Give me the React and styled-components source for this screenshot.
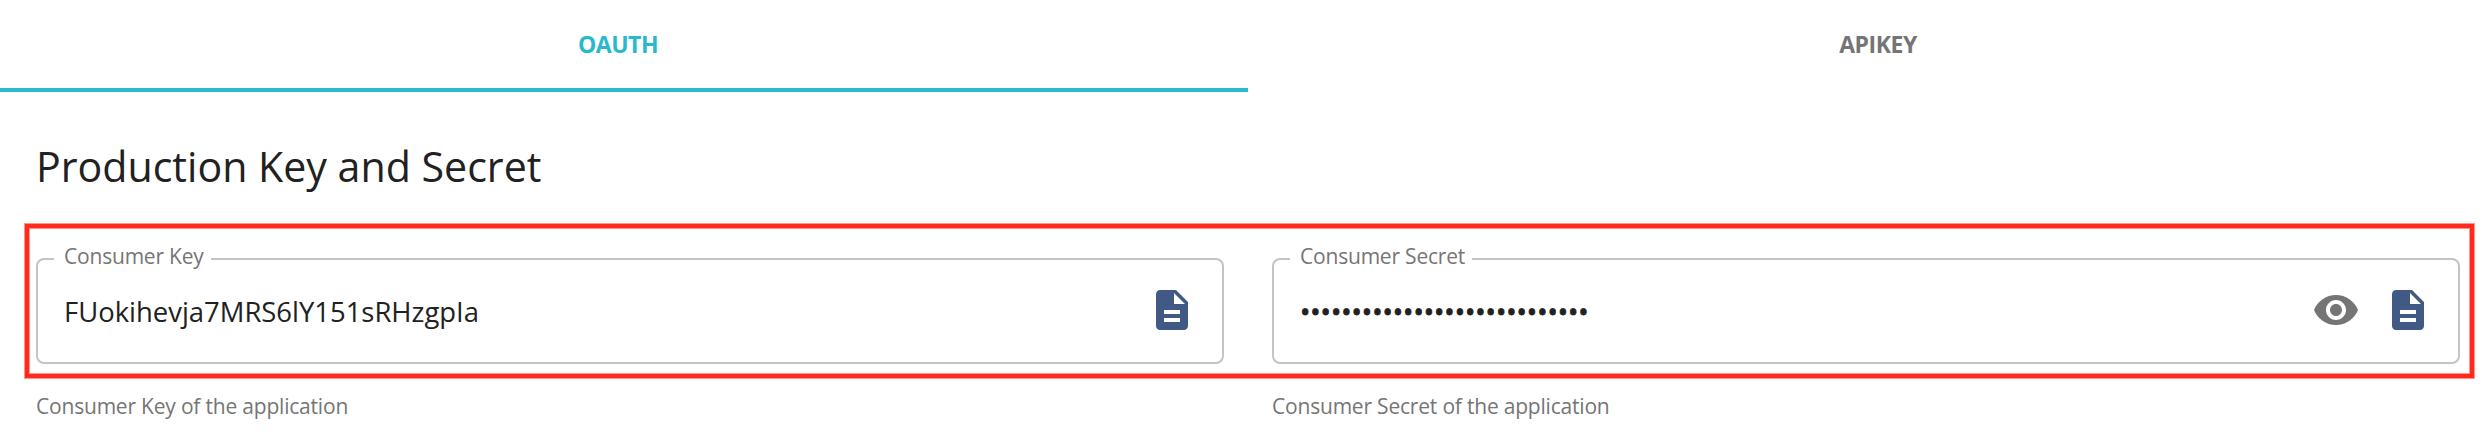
import React from 'react';
import styled, { createGlobalStyle } from 'styled-components';

const GlobalStyle = createGlobalStyle`
  * { box-sizing: border-box; }
  body {
    margin: 0;
    background: #fff;
    color: #212121;
    font-family: "Open Sans", sans-serif;
    overflow: hidden;
  }
`;

const Page = styled.main`
  height: 443px;
  overflow: hidden;
`;

const Tabs = styled.nav`
  display: flex;
  width: 2520px;
  margin-left: -12px;
`;

const Tab = styled.button`
  flex: 1;
  height: 92px;
  padding: 0 0 1px;
  border: 0;
  border-bottom: 4px solid ${(p) => (p.$active ? '#29b8ce' : 'transparent')};
  background: none;
  color: ${(p) => (p.$active ? '#29b8ce' : '#757575')};
  font: 700 23px/86px "Open Sans", sans-serif;
  letter-spacing: -0.45px;
  text-transform: uppercase;
`;

const Title = styled.h2`
  margin: 46px 0 30px 36px;
  font-size: 41.14px;
  font-weight: 400;
  line-height: 56px;
`;

const Highlight = styled.section`
  display: flex;
  gap: 48px;
  width: 2449px;
  height: 154px;
  margin-left: 25px;
  padding: 19px 10px 0 7px;
  border: 4px solid #ff2a1c;
  box-shadow: 0 0 0 1px rgba(255, 42, 28, 0.5), inset 0 0 0 1px rgba(255, 42, 28, 0.5);
`;

const Field = styled.fieldset`
  flex: 1;
  min-width: 0;
  height: 117px;
  margin: 0;
  padding: 0 26px;
  border: 2px solid #c4c4c4;
  border-radius: 8px;
`;

const Legend = styled.legend`
  height: 24px;
  margin-left: -10px;
  padding: 0 7px 0 10px;
  color: #757575;
  font-size: 21px;
  letter-spacing: -0.2px;
  line-height: 18px;
`;

const Row = styled.div`
  display: flex;
  align-items: center;
  gap: 24px;
  padding-top: 15px;
`;

const Value = styled.span`
  flex: 1;
  padding-top: 3px;
  font-size: 27.43px;
  line-height: 38px;
  -webkit-text-stroke: ${(p) => (p.$masked ? '0.8px #212121' : '0')};
`;

const Icon = styled.svg`
  width: 48px;
  height: 48px;
  fill: ${(p) => p.$color};
`;

const Helpers = styled.div`
  display: flex;
  gap: 48px;
  padding: 13px 28px 0 36px;
`;

const Helper = styled.p`
  flex: 1;
  margin: 0;
  color: #757575;
  font-size: 21px;
  letter-spacing: -0.2px;
  line-height: 30px;
`;

const CopyIcon = () => (
  <Icon viewBox="0 0 24 24" $color="#415a85">
    <path d="M14 2H6c-1.1 0-1.99.9-1.99 2L4 20c0 1.1.89 2 1.99 2H18c1.1 0 2-.9 2-2V8l-6-6zm2 16H8v-2h8v2zm0-4H8v-2h8v2zm-3-5V3.5L18.5 9H13z" />
  </Icon>
);

const EyeIcon = () => (
  <Icon viewBox="0 0 24 24" $color="#757575">
    <path d="M12 4.5C7 4.5 2.73 7.61 1 12c1.73 4.39 6 7.5 11 7.5s9.27-3.11 11-7.5c-1.73-4.39-6-7.5-11-7.5zM12 17c-2.76 0-5-2.24-5-5s2.24-5 5-5 5 2.24 5 5-2.24 5-5 5zm0-8c-1.66 0-3 1.34-3 3s1.34 3 3 3 3-1.34 3-3-1.34-3-3-3z" />
  </Icon>
);

export default function App() {
  return (
    <Page>
      <GlobalStyle />
      <Tabs>
        <Tab $active>OAuth</Tab>
        <Tab>ApiKey</Tab>
      </Tabs>
      <Title>Production Key and Secret</Title>
      <Highlight>
        <Field>
          <Legend>Consumer Key</Legend>
          <Row>
            <Value>FUokihevja7MRS6lY151sRHzgpIa</Value>
            <CopyIcon />
          </Row>
        </Field>
        <Field>
          <Legend>Consumer Secret</Legend>
          <Row>
            <Value $masked>{'•'.repeat(28)}</Value>
            <EyeIcon />
            <CopyIcon />
          </Row>
        </Field>
      </Highlight>
      <Helpers>
        <Helper>Consumer Key of the application</Helper>
        <Helper>Consumer Secret of the application</Helper>
      </Helpers>
    </Page>
  );
}
